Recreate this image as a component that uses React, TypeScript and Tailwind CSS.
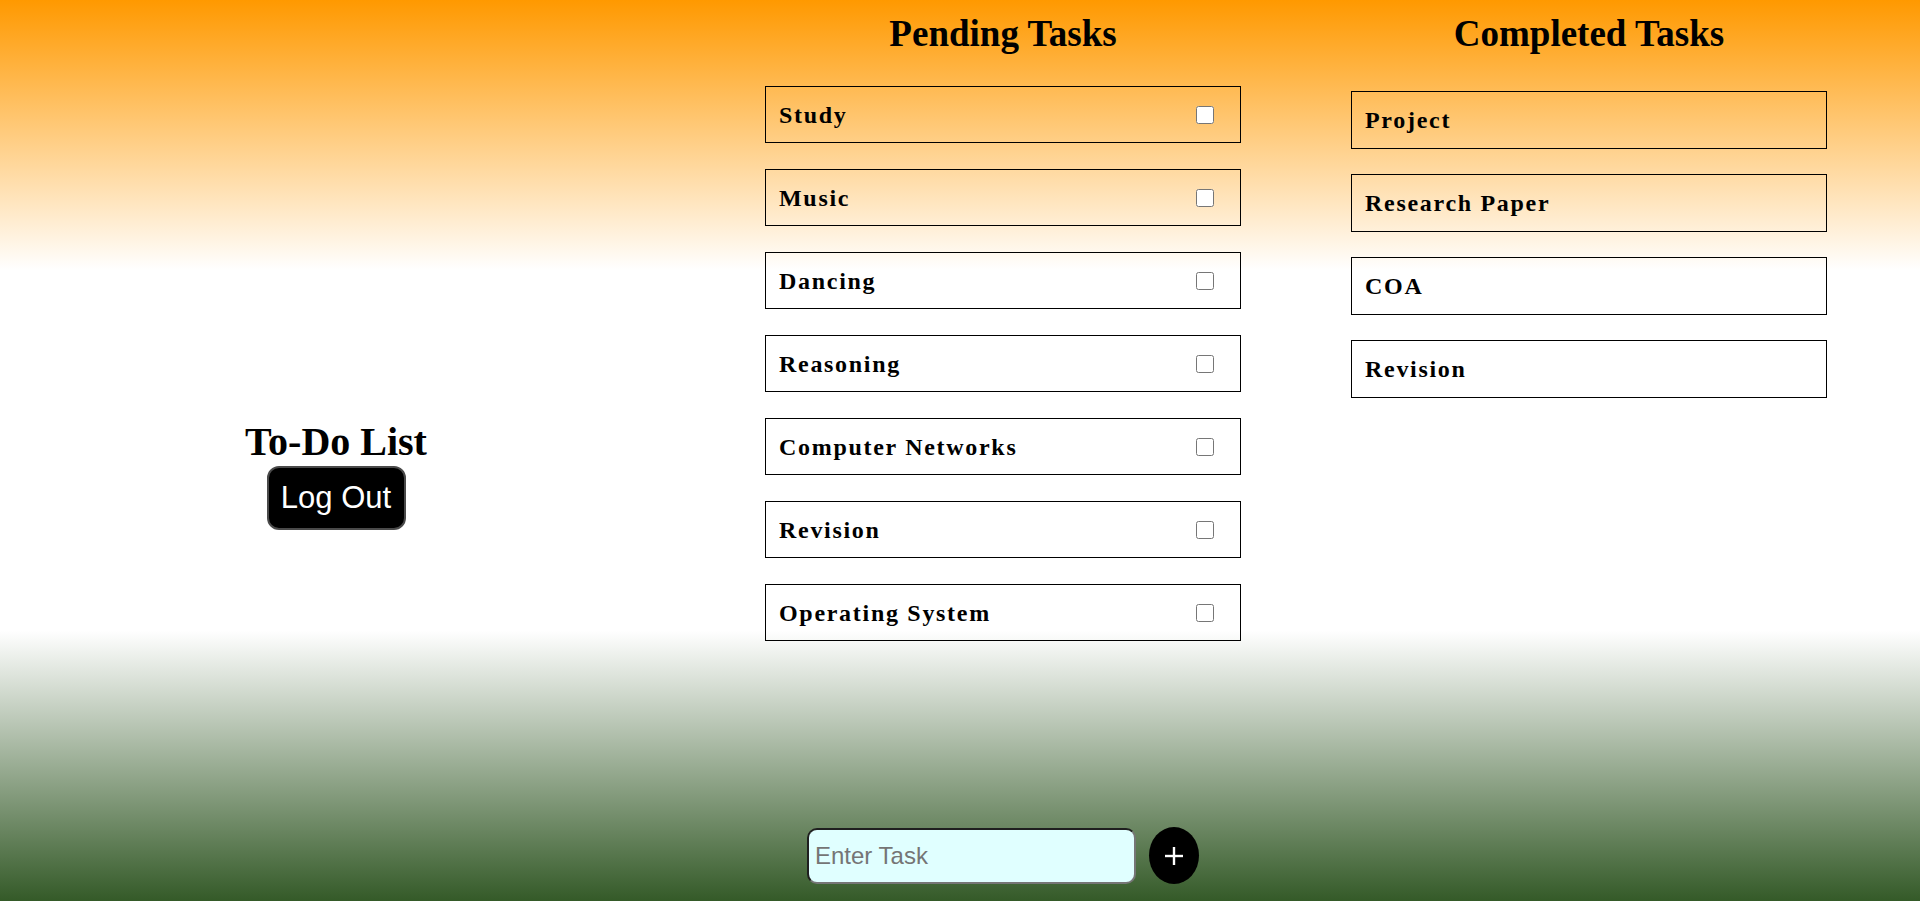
import { useState } from "react";

const pendingTasks = [
  "Study",
  "Music",
  "Dancing",
  "Reasoning",
  "Computer Networks",
  "Revision",
  "Operating System",
];

const completedTasks = ["Project", "Research Paper", "COA", "Revision"];

function TaskRow({ name, checkbox }: { name: string; checkbox?: boolean }) {
  return (
    <div
      className={`flex items-center justify-between border border-black pl-[13px] pr-[26px] ${
        checkbox ? "h-[57px]" : "h-[58px]"
      }`}
    >
      <span className="text-[24px] font-bold leading-[28px] tracking-[1.7px] text-black">
        {name}
      </span>
      {checkbox && (
        <input type="checkbox" className="m-0 h-[18px] w-[18px]" />
      )}
    </div>
  );
}

export default function App() {
  const [task, setTask] = useState("");

  return (
    <div className="flex h-[901px] w-full bg-[linear-gradient(#ff9900_0%,#ffffff_30%,#ffffff_70%,#345a28_100%)] font-['Liberation_Serif',serif] text-black">
      {/* Left side */}
      <div className="flex w-[672px] shrink-0 flex-col items-center justify-center pt-[47px]">
        <h1 className="h-[46px] text-[40px] font-bold leading-[46px]">
          To-Do List
        </h1>
        <button className="mt-[1px] h-[64px] w-[139px] rounded-[12px] border-2 border-[#4a4a4a] bg-black font-['Liberation_Sans',Arial,sans-serif] text-[31px] leading-none text-white">
          Log Out
        </button>
      </div>

      {/* Pending */}
      <div className="ml-[93px] flex w-[476px] shrink-0 flex-col pt-[13px]">
        <h1 className="h-[42px] text-center text-[37px] font-bold leading-[42px]">
          Pending Tasks
        </h1>
        <div className="mt-[31px] flex flex-col gap-[26px]">
          {pendingTasks.map((t, i) => (
            <TaskRow key={i} name={t} checkbox />
          ))}
        </div>

        <div className="mt-auto mb-[17px] flex items-center justify-center gap-[13px]">
          <input
            value={task}
            onChange={(e) => setTask(e.target.value)}
            placeholder="Enter Task"
            className="h-[56px] w-[329px] rounded-[10px] border-2 border-t-[#1f1f1f] border-l-[#1f1f1f] border-b-[#767676] border-r-[#767676] bg-[#e0ffff] pl-[6px] font-['Liberation_Sans',Arial,sans-serif] text-[24px] outline-none placeholder:text-[#757575]"
          />
          <button className="flex h-[57px] w-[50px] items-center justify-center rounded-[50%] bg-black">
            <svg width="20" height="20" viewBox="0 0 20 20">
              <line x1="10" y1="1" x2="10" y2="19" stroke="white" strokeWidth="2.4" />
              <line x1="1" y1="10" x2="19" y2="10" stroke="white" strokeWidth="2.4" />
            </svg>
          </button>
        </div>
      </div>

      {/* Completed */}
      <div className="ml-[110px] flex w-[476px] shrink-0 flex-col pt-[13px]">
        <h1 className="h-[42px] text-center text-[37px] font-bold leading-[42px]">
          Completed Tasks
        </h1>
        <div className="mt-[36px] flex flex-col gap-[25px]">
          {completedTasks.map((t, i) => (
            <TaskRow key={i} name={t} />
          ))}
        </div>
      </div>
    </div>
  );
}
